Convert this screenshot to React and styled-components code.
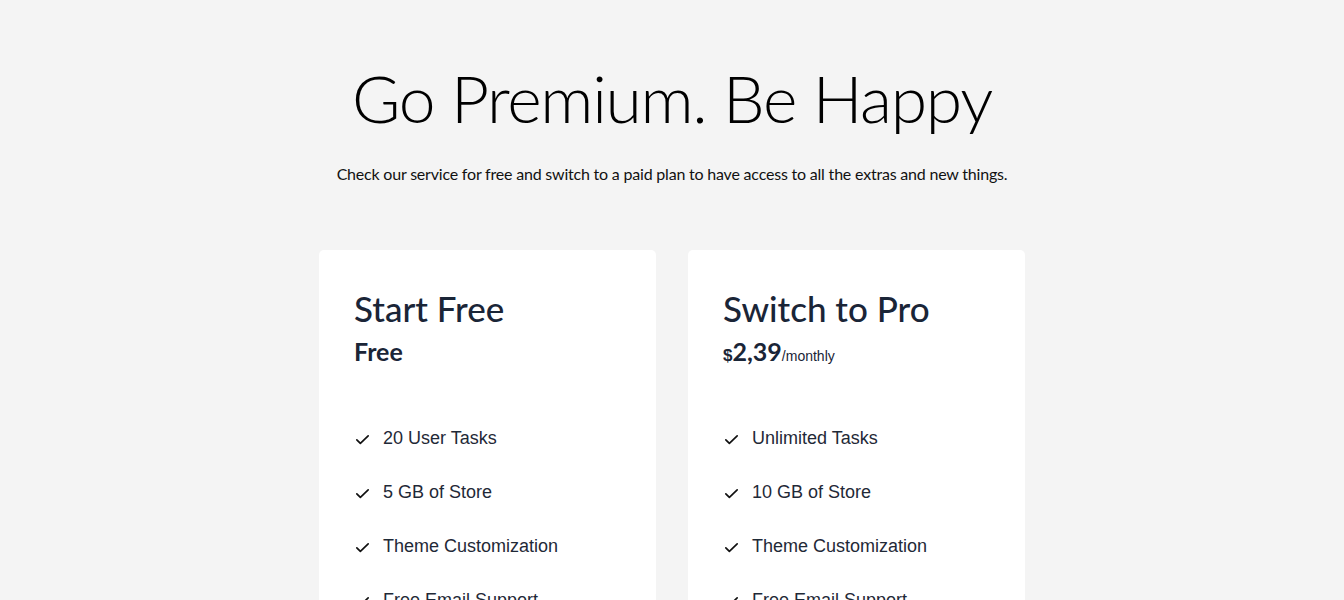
import React from "react";
import styled, { createGlobalStyle } from "styled-components";

const Global = createGlobalStyle`
  html, body { margin: 0; padding: 0; background: #f4f4f4; }
  body { font-family: "Lato", "Liberation Sans", sans-serif; }
`;

const Page = styled.main`
  display: flex;
  flex-direction: column;
  align-items: center;
  padding-top: 56px;
`;

const Title = styled.h1`
  margin: 0;
  font-family: "Lato", sans-serif;
  font-weight: 300;
  font-size: 66px;
  line-height: 84px;
  color: #000;
  letter-spacing: -1.3px;
`;

const Subtitle = styled.p`
  margin: 22px 0 0;
  font-family: "Lato", sans-serif;
  font-size: 16px;
  line-height: 24px;
  color: #111;
  letter-spacing: -0.2px;
`;

const Cards = styled.div`
  display: grid;
  grid-template-columns: 337px 337px;
  gap: 32px;
  margin-top: 64px;
`;

const Card = styled.section`
  background: #fff;
  border-radius: 5px;
  padding: 35px 35px 0;
  min-height: 400px;
  color: #1e293b;
`;

const PlanName = styled.h2`
  margin: 0;
  font-family: "Lato", sans-serif;
  font-weight: 500;
  font-size: 35px;
  line-height: 46px;
  color: #1a2537;
`;

const Price = styled.div`
  margin-top: 5px;
  display: flex;
  align-items: baseline;
  font-family: "Lato", sans-serif;
  font-weight: 700;
  color: #1a2537;
  height: 34px;
`;

const Currency = styled.span`
  font-size: 17px;
  font-family: "Liberation Sans", sans-serif;
`;

const Amount = styled.span`
  font-size: 25px;
`;

const Period = styled.span`
  font-family: "Liberation Sans", sans-serif;
  font-weight: 400;
  font-size: 14px;
`;

const Features = styled.ul`
  list-style: none;
  margin: 58px 0 0;
  padding: 0;
  display: flex;
  flex-direction: column;
  gap: 33px;
`;

const Feature = styled.li`
  display: flex;
  align-items: center;
  gap: 12px;
  font-family: "Liberation Sans", sans-serif;
  font-size: 18px;
  line-height: 21px;
  color: #1f2937;
`;

const CheckIcon = styled.svg`
  flex: none;
  margin-top: 2px;
`;

const Check = () => (
  <CheckIcon width="17" height="17" viewBox="0 0 24 24" fill="none" stroke="#111" strokeWidth="2.4" strokeLinecap="round" strokeLinejoin="round">
    <path d="M4 12.5l5 5L20 7" />
  </CheckIcon>
);

const plans = [
  { name: "Start Free", price: null, features: ["20 User Tasks", "5 GB of Store", "Theme Customization", "Free Email Support"] },
  { name: "Switch to Pro", price: "2,39", features: ["Unlimited Tasks", "10 GB of Store", "Theme Customization", "Free Email Support"] },
];

export default function App() {
  return (
    <>
      <Global />
      <Page>
        <Title>Go Premium. Be Happy</Title>
        <Subtitle>Check our service for free and switch to a paid plan to have access to all the extras and new things.</Subtitle>
        <Cards>
          {plans.map((p) => (
            <Card key={p.name}>
              <PlanName>{p.name}</PlanName>
              <Price>
                {p.price ? (
                  <>
                    <Currency>$</Currency>
                    <Amount>{p.price}</Amount>
                    <Period>/monthly</Period>
                  </>
                ) : (
                  <Amount>Free</Amount>
                )}
              </Price>
              <Features>
                {p.features.map((f) => (
                  <Feature key={f}>
                    <Check />
                    {f}
                  </Feature>
                ))}
              </Features>
            </Card>
          ))}
        </Cards>
      </Page>
    </>
  );
}
